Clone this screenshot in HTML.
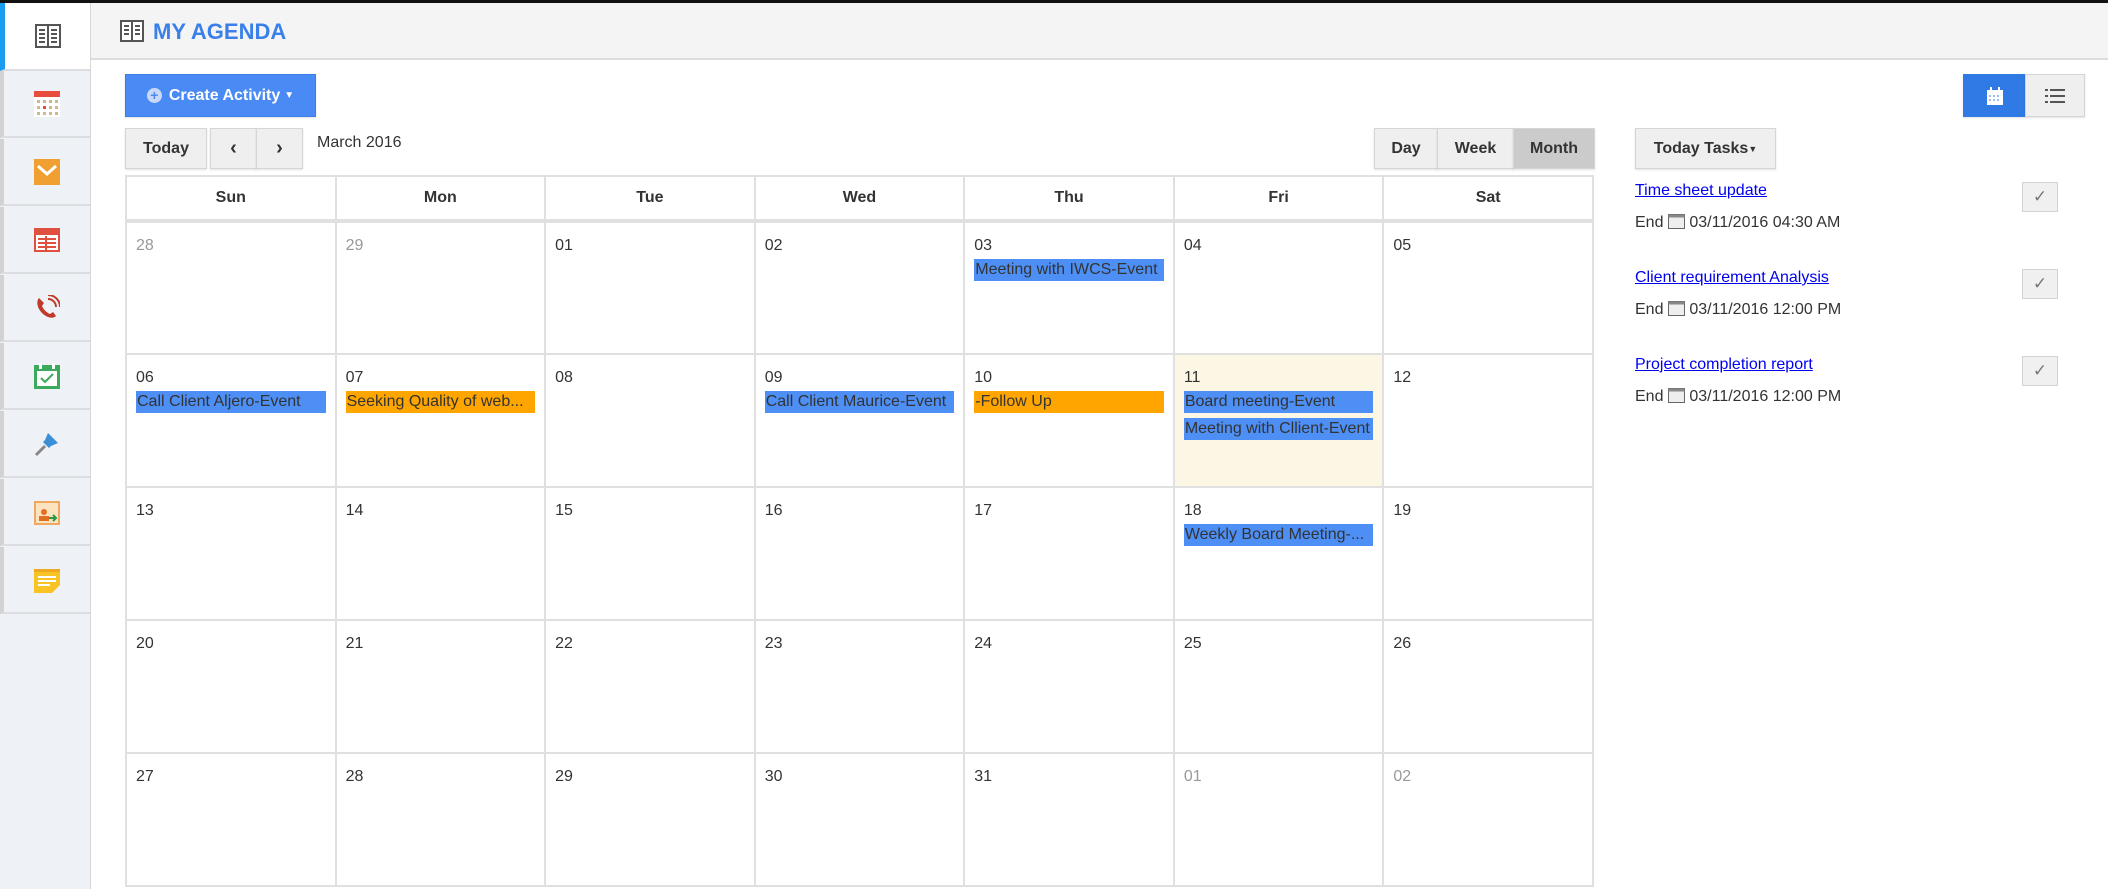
<!DOCTYPE html>
<html><head><meta charset="utf-8"><style>
*{box-sizing:border-box;margin:0;padding:0}
body{width:2108px;height:889px;position:relative;overflow:hidden;background:#fff;font-family:"Liberation Sans",sans-serif;color:#333}
.a{position:absolute}
#top{left:0;top:0;width:2108px;height:3px;background:#111}
#side{left:0;top:3px;width:91px;height:886px;background:#eef1f6;border-right:1px solid #d6d6d6}
.si{position:absolute;left:0;width:90px;height:67px;border-bottom:2px solid #dcdde0;border-left:4px solid #d2d2d2;display:flex;align-items:center;justify-content:center}
#hdr{left:91px;top:3px;width:2017px;height:57px;background:#f4f4f4;border-bottom:2px solid #ddd}
.btn{position:absolute;background:#efefef;border:1px solid #d5d5d5;font-weight:bold;font-size:16px;display:flex;align-items:center;justify-content:center;color:#333;box-shadow:0 1px 2px rgba(0,0,0,.12)}
table{position:absolute;left:125px;top:175px;width:1469px;border-collapse:collapse;table-layout:fixed}
td,th{border:2px solid #e0e0e0}
th{height:45px;font-size:16px;font-weight:bold;color:#333;border-bottom-width:4px}
td{height:133px;vertical-align:top;padding:10px 9px 0 9px;font-size:16px}
td .d{line-height:26px}
td.g .d{color:#999}
.ev{height:22px;line-height:22px;margin-top:0;margin-bottom:5px;padding-left:1px;white-space:nowrap;overflow:hidden;font-size:16px;color:#333}
.b{background:#4d8ff5}.o{background:#ffa500}
.task{position:absolute;left:1635px;font-size:16px}
.task a{color:#00e;text-decoration:underline}
.end{margin-top:12px;color:#333}
.cb{position:absolute;left:2022px;width:36px;height:30px;background:#f0f0f0;border:1px solid #d2d2d2;color:#777;font-size:17px;display:flex;align-items:center;justify-content:center}
</style></head><body>
<div class="a" id="top"></div>
<div class="a" id="side">
 <div class="si" style="top:0;height:68px;background:#fff;border-left:5px solid #1a9cf0">
  <svg width="26" height="24" viewBox="0 0 26 24"><rect x="1" y="1" width="24" height="22" fill="#fff" stroke="#555" stroke-width="2"/><line x1="13" y1="1" x2="13" y2="23" stroke="#555" stroke-width="2"/><g stroke="#555" stroke-width="2"><line x1="4" y1="6" x2="10" y2="6"/><line x1="4" y1="10" x2="10" y2="10"/><line x1="4" y1="14" x2="10" y2="14"/><line x1="4" y1="18" x2="10" y2="18"/><line x1="16" y1="6" x2="22" y2="6"/><line x1="16" y1="10" x2="22" y2="10"/><line x1="16" y1="14" x2="22" y2="14"/><line x1="16" y1="18" x2="22" y2="18"/></g></svg></div>
 <div class="si" style="top:68px"><svg width="26" height="26"><rect x="0" y="0" width="26" height="26" fill="#fff"/><rect x="0" y="0" width="26" height="6" fill="#e84c3d"/><g fill="#cdb98a"><rect x="3" y="9" width="3" height="3"/><rect x="9" y="9" width="3" height="3"/><rect x="15" y="9" width="3" height="3"/><rect x="21" y="9" width="3" height="3"/><rect x="3" y="15" width="3" height="3"/><rect x="15" y="15" width="3" height="3"/><rect x="21" y="15" width="3" height="3"/><rect x="3" y="21" width="3" height="3"/><rect x="9" y="21" width="3" height="3"/><rect x="15" y="21" width="3" height="3"/><rect x="21" y="21" width="3" height="3"/></g><rect x="9" y="15" width="3" height="3" fill="#e84c3d"/></svg></div>
 <div class="si" style="top:136px"><svg width="26" height="26"><rect width="26" height="26" fill="#f0a030"/><path d="M4 7 L13 15 L22 7" stroke="#fff" stroke-width="3" fill="none"/><rect x="4" y="7" width="18" height="13" fill="none" stroke="#fff" stroke-width="0"/></svg></div>
 <div class="si" style="top:204px"><svg width="26" height="24"><rect x="1" y="1" width="24" height="22" fill="#fff" stroke="#e05040" stroke-width="2"/><rect x="1" y="1" width="24" height="6" fill="#e05040"/><g stroke="#e05040" stroke-width="2"><line x1="4" y1="11" x2="22" y2="11"/><line x1="4" y1="15" x2="22" y2="15"/><line x1="4" y1="19" x2="22" y2="19"/><line x1="12" y1="8" x2="12" y2="22"/></g></svg></div>
 <div class="si" style="top:272px"><svg width="26" height="26"><path d="M5 3 C2 6 3 13 8 18 C13 23 19 24 22 21 L19 17 L16 19 C13 18 9 14 8 11 L10 8 Z" fill="#c0392b"/><path d="M14 4 A8 8 0 0 1 22 12 M14 0 A12 12 0 0 1 26 12" stroke="#c0392b" stroke-width="2" fill="none"/></svg></div>
 <div class="si" style="top:340px"><svg width="26" height="26"><rect x="0" y="2" width="26" height="24" fill="#3caa5c"/><rect x="3" y="8" width="20" height="15" fill="#fff"/><rect x="5" y="0" width="3" height="6" fill="#fff"/><rect x="18" y="0" width="3" height="6" fill="#fff"/><path d="M7 15 L11 19 L19 11" stroke="#3caa5c" stroke-width="2" fill="none"/></svg></div>
 <div class="si" style="top:408px"><svg width="26" height="26"><path d="M2 24 L11 15" stroke="#888" stroke-width="3"/><path d="M9 11 L15 17 L17 15 L24 12 L14 2 L11 9 Z" fill="#3a8fd8"/></svg></div>
 <div class="si" style="top:476px"><svg width="26" height="26"><rect x="1" y="3" width="24" height="22" fill="#fbe3c0" stroke="#f0a860" stroke-width="2"/><circle cx="10" cy="13" r="3" fill="#e07020"/><rect x="5" y="17" width="10" height="5" fill="#e07020"/><path d="M15 19 L22 19 M19 16 L22 19 L19 22" stroke="#2a9a4a" stroke-width="2" fill="none"/></svg></div>
 <div class="si" style="top:544px"><svg width="26" height="26"><path d="M0 2 H26 V18 L18 26 H0 Z" fill="#f7c325"/><rect x="0" y="2" width="26" height="3" fill="#f0a820"/><g stroke="#fff" stroke-width="2"><line x1="4" y1="10" x2="22" y2="10"/><line x1="4" y1="14" x2="22" y2="14"/><line x1="4" y1="18" x2="16" y2="18"/></g></svg></div>
</div>
<div class="a" id="hdr"></div>
<svg class="a" style="left:120px;top:20px" width="24" height="22"><rect x="1" y="1" width="22" height="20" fill="#fff" stroke="#555" stroke-width="2"/><line x1="12" y1="1" x2="12" y2="21" stroke="#555" stroke-width="2"/><g stroke="#555" stroke-width="2"><line x1="4" y1="6" x2="9" y2="6"/><line x1="4" y1="10" x2="9" y2="10"/><line x1="4" y1="14" x2="9" y2="14"/><line x1="15" y1="6" x2="20" y2="6"/><line x1="15" y1="10" x2="20" y2="10"/><line x1="15" y1="14" x2="20" y2="14"/></g></svg>
<div class="a" style="left:153px;top:19px;font-size:22px;font-weight:bold;color:#3b80e8">MY AGENDA</div>

<div class="btn" style="left:125px;top:74px;width:191px;height:43px;background:#4a8af4;border-color:#3b7de8;color:#fff"><span style="display:inline-block;width:15px;height:15px;border-radius:50%;background:#c9d9f7;color:#4a8af4;font-size:14px;line-height:15px;text-align:center;margin-right:7px">+</span>Create Activity <span style="font-size:10px;margin-left:4px">▼</span></div>
<div class="btn" style="left:125px;top:128px;width:82px;height:41px">Today</div>
<div class="btn" style="left:210px;top:128px;width:47px;height:41px;font-size:20px">‹</div>
<div class="btn" style="left:256px;top:128px;width:47px;height:41px;font-size:20px">›</div>
<div class="a" style="left:317px;top:134px;font-size:16px">March 2016</div>

<div class="btn" style="left:1374px;top:128px;width:64px;height:41px">Day</div>
<div class="btn" style="left:1437px;top:128px;width:77px;height:41px">Week</div>
<div class="btn" style="left:1513px;top:128px;width:82px;height:41px;background:#cbcbcb">Month</div>

<div class="btn" style="left:1963px;top:74px;width:63px;height:43px;background:#2f7ae5;border-color:#2f7ae5"><svg width="16" height="18"><rect x="0" y="3" width="16" height="15" fill="#fff"/><rect x="3" y="0" width="2" height="5" fill="#fff"/><rect x="11" y="0" width="2" height="5" fill="#fff"/><g fill="#9dbff2"><rect x="2" y="8" width="2" height="2"/><rect x="6" y="8" width="2" height="2"/><rect x="10" y="8" width="2" height="2"/><rect x="2" y="12" width="2" height="2"/><rect x="6" y="12" width="2" height="2"/><rect x="10" y="12" width="2" height="2"/></g></svg></div>
<div class="btn" style="left:2025px;top:74px;width:60px;height:43px"><svg width="20" height="14"><g fill="#555"><rect x="0" y="0" width="3" height="2"/><rect x="5" y="0" width="15" height="2"/><rect x="0" y="6" width="3" height="2"/><rect x="5" y="6" width="15" height="2"/><rect x="0" y="12" width="3" height="2"/><rect x="5" y="12" width="15" height="2"/></g></svg></div>

<div class="btn" style="left:1635px;top:128px;width:141px;height:41px">Today Tasks<span style="font-size:9px">▼</span></div>

<table>
<tr><th>Sun</th><th>Mon</th><th>Tue</th><th>Wed</th><th>Thu</th><th>Fri</th><th>Sat</th></tr>
<tr><td class="g"><div class="d">28</div></td><td class="g"><div class="d">29</div></td><td><div class="d">01</div></td><td><div class="d">02</div></td><td><div class="d">03</div><div class="ev b">Meeting with IWCS-Event</div></td><td><div class="d">04</div></td><td><div class="d">05</div></td></tr>
<tr><td><div class="d">06</div><div class="ev b">Call Client Aljero-Event</div></td><td><div class="d">07</div><div class="ev o">Seeking Quality of web...</div></td><td><div class="d">08</div></td><td><div class="d">09</div><div class="ev b">Call Client Maurice-Event</div></td><td><div class="d">10</div><div class="ev o">-Follow Up</div></td><td style="background:#fcf7e4"><div class="d">11</div><div class="ev b">Board meeting-Event</div><div class="ev b">Meeting with Cllient-Event</div></td><td><div class="d">12</div></td></tr>
<tr><td><div class="d">13</div></td><td><div class="d">14</div></td><td><div class="d">15</div></td><td><div class="d">16</div></td><td><div class="d">17</div></td><td><div class="d">18</div><div class="ev b">Weekly Board Meeting-...</div></td><td><div class="d">19</div></td></tr>
<tr><td><div class="d">20</div></td><td><div class="d">21</div></td><td><div class="d">22</div></td><td><div class="d">23</div></td><td><div class="d">24</div></td><td><div class="d">25</div></td><td><div class="d">26</div></td></tr>
<tr><td><div class="d">27</div></td><td><div class="d">28</div></td><td><div class="d">29</div></td><td><div class="d">30</div></td><td><div class="d">31</div></td><td class="g"><div class="d">01</div></td><td class="g"><div class="d">02</div></td></tr>
</table>

<div class="task" style="top:182px"><a>Time sheet update</a><div class="end">End <svg width="17" height="17" style="vertical-align:-2px"><rect x="0.5" y="2.5" width="16" height="14" fill="#eee" stroke="#666"/><rect x="0.5" y="2.5" width="16" height="3" fill="#888"/></svg> 03/11/2016 04:30 AM</div></div>
<div class="task" style="top:269px"><a>Client requirement Analysis</a><div class="end">End <svg width="17" height="17" style="vertical-align:-2px"><rect x="0.5" y="2.5" width="16" height="14" fill="#eee" stroke="#666"/><rect x="0.5" y="2.5" width="16" height="3" fill="#888"/></svg> 03/11/2016 12:00 PM</div></div>
<div class="task" style="top:356px"><a>Project completion report</a><div class="end">End <svg width="17" height="17" style="vertical-align:-2px"><rect x="0.5" y="2.5" width="16" height="14" fill="#eee" stroke="#666"/><rect x="0.5" y="2.5" width="16" height="3" fill="#888"/></svg> 03/11/2016 12:00 PM</div></div>
<div class="cb" style="top:182px">✓</div>
<div class="cb" style="top:269px">✓</div>
<div class="cb" style="top:356px">✓</div>
</body></html>
